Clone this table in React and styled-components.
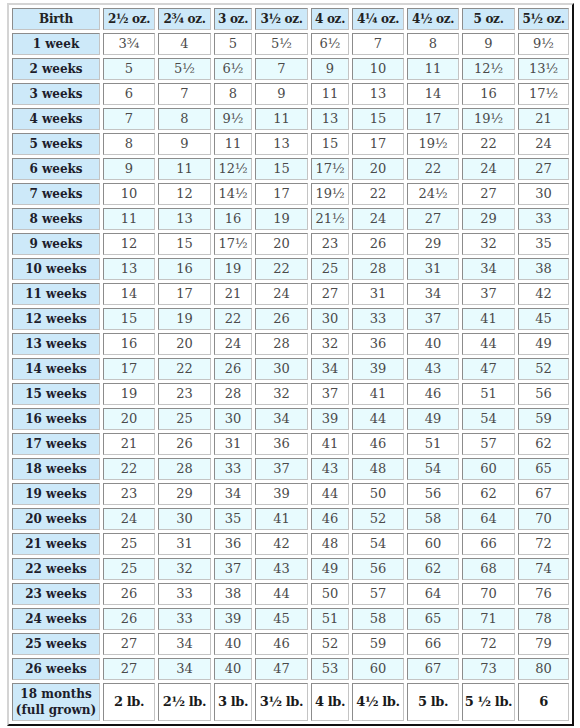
import React from "react";
import styled, { createGlobalStyle } from "styled-components";

const GlobalStyle = createGlobalStyle`
  html, body {
    margin: 0;
    padding: 0;
    background: #ffffff;
  }
  body {
    font-family: "DejaVu Serif", Georgia, serif;
  }
`;

const COLUMNS = [
  { label: "Birth", width: 88 },
  { label: "2½ oz.", width: 52 },
  { label: "2¾ oz.", width: 53 },
  { label: "3 oz.", width: 38 },
  { label: "3½ oz.", width: 53 },
  { label: "4 oz.", width: 38 },
  { label: "4¼ oz.", width: 52 },
  { label: "4½ oz.", width: 52 },
  { label: "5 oz.", width: 53 },
  { label: "5½ oz.", width: 51 },
];

const ROWS = [
  ["1 week", "3¾", "4", "5", "5½", "6½", "7", "8", "9", "9½"],
  ["2 weeks", "5", "5½", "6½", "7", "9", "10", "11", "12½", "13½"],
  ["3 weeks", "6", "7", "8", "9", "11", "13", "14", "16", "17½"],
  ["4 weeks", "7", "8", "9½", "11", "13", "15", "17", "19½", "21"],
  ["5 weeks", "8", "9", "11", "13", "15", "17", "19½", "22", "24"],
  ["6 weeks", "9", "11", "12½", "15", "17½", "20", "22", "24", "27"],
  ["7 weeks", "10", "12", "14½", "17", "19½", "22", "24½", "27", "30"],
  ["8 weeks", "11", "13", "16", "19", "21½", "24", "27", "29", "33"],
  ["9 weeks", "12", "15", "17½", "20", "23", "26", "29", "32", "35"],
  ["10 weeks", "13", "16", "19", "22", "25", "28", "31", "34", "38"],
  ["11 weeks", "14", "17", "21", "24", "27", "31", "34", "37", "42"],
  ["12 weeks", "15", "19", "22", "26", "30", "33", "37", "41", "45"],
  ["13 weeks", "16", "20", "24", "28", "32", "36", "40", "44", "49"],
  ["14 weeks", "17", "22", "26", "30", "34", "39", "43", "47", "52"],
  ["15 weeks", "19", "23", "28", "32", "37", "41", "46", "51", "56"],
  ["16 weeks", "20", "25", "30", "34", "39", "44", "49", "54", "59"],
  ["17 weeks", "21", "26", "31", "36", "41", "46", "51", "57", "62"],
  ["18 weeks", "22", "28", "33", "37", "43", "48", "54", "60", "65"],
  ["19 weeks", "23", "29", "34", "39", "44", "50", "56", "62", "67"],
  ["20 weeks", "24", "30", "35", "41", "46", "52", "58", "64", "70"],
  ["21 weeks", "25", "31", "36", "42", "48", "54", "60", "66", "72"],
  ["22 weeks", "25", "32", "37", "43", "49", "56", "62", "68", "74"],
  ["23 weeks", "26", "33", "38", "44", "50", "57", "64", "70", "76"],
  ["24 weeks", "26", "33", "39", "45", "51", "58", "65", "71", "78"],
  ["25 weeks", "27", "34", "40", "46", "52", "59", "66", "72", "79"],
  ["26 weeks", "27", "34", "40", "47", "53", "60", "67", "73", "80"],
];

const FULL_GROWN = ["2 lb.", "2½ lb.", "3 lb.", "3½ lb.", "4 lb.", "4½ lb.", "5 lb.", "5 ½ lb.", "6"];

const Page = styled.div`
  padding: 3px 6px 0 7px;
`;

const Table = styled.table`
  width: 567px;
  table-layout: fixed;
  border-collapse: separate;
  border-spacing: 3px;
  border-style: solid;
  border-width: 2px;
  border-color: #d4d4d4 #111111 #111111 #d4d4d4;
  background: #ffffff;
`;

const Cell = styled.td`
  height: 20px;
  padding: 0 1px;
  text-align: center;
  vertical-align: middle;
  white-space: nowrap;
  border: 1px solid;
  border-color: #8c8c8c #c4c4c4 #c4c4c4 #8c8c8c;
  font-size: 12px;
  line-height: 14px;
`;

const HeadCell = styled(Cell).attrs({ as: "th" })`
  background: #cde9f9;
  color: #222222;
  font-weight: bold;
  letter-spacing: -0.3px;
`;

const LabelCell = styled(Cell).attrs({ as: "th" })`
  background: #cde9f9;
  color: #1d1d2b;
  font-weight: bold;
  height: ${(p) => (p.$tall ? "36px" : "20px")};
  line-height: ${(p) => (p.$tall ? "16px" : "14px")};
`;

const ValueCell = styled(Cell)`
  background: ${(p) => (p.$shade ? "#e8fbfe" : "#ffffff")};
  color: ${(p) => (p.$strong ? "#1a1a1a" : "#4a4a4a")};
  font-weight: ${(p) => (p.$strong ? "bold" : "normal")};
  font-size: 13px;
  letter-spacing: ${(p) => (p.$strong ? "-0.4px" : "0")};
`;

export default function App() {
  return (
    <Page>
      <GlobalStyle />
      <Table>
        <colgroup>
          {COLUMNS.map((c) => (
            <col key={c.label} style={{ width: c.width }} />
          ))}
        </colgroup>
        <thead>
          <tr>
            {COLUMNS.map((c) => (
              <HeadCell key={c.label}>{c.label}</HeadCell>
            ))}
          </tr>
        </thead>
        <tbody>
          {ROWS.map((row, i) => (
            <tr key={row[0]}>
              <LabelCell>{row[0]}</LabelCell>
              {row.slice(1).map((v, j) => (
                <ValueCell key={j} $shade={i % 2 === 1}>
                  {v}
                </ValueCell>
              ))}
            </tr>
          ))}
          <tr>
            <LabelCell $tall>
              18 months
              <br />
              (full grown)
            </LabelCell>
            {FULL_GROWN.map((v, j) => (
              <ValueCell key={j} $strong>
                {v}
              </ValueCell>
            ))}
          </tr>
        </tbody>
      </Table>
    </Page>
  );
}
